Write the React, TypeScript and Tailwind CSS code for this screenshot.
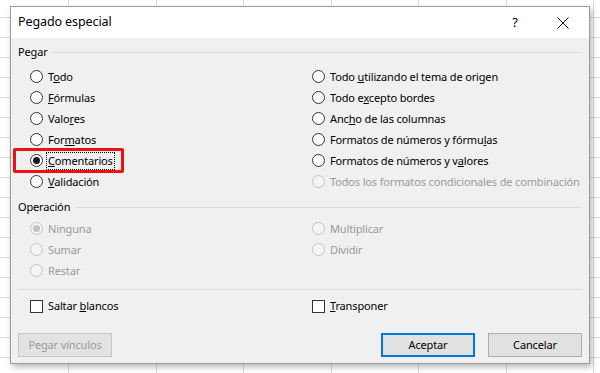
import type { ReactNode } from "react";

const font = { fontFamily: '"Noto Sans", "Open Sans", sans-serif' };

const colWidths = [69, 88, 87, 88, 87, 88, 87, 88];

function Hoja() {
  return (
    <div className="flex -mt-[2px]">
      {colWidths.map((w, i) => (
        <div key={i} className="shrink-0 flex flex-col" style={{ width: w }}>
          {Array.from({ length: 20 }).map((_, j) => (
            <div key={j} className="h-[20px] border-r border-b border-[#dadada]" />
          ))}
        </div>
      ))}
    </div>
  );
}

function Radio({
  label,
  checked = false,
  disabled = false,
  focus = false,
}: {
  label: ReactNode;
  checked?: boolean;
  disabled?: boolean;
  focus?: boolean;
}) {
  return (
    <div className="h-[21px] flex items-center gap-[5px]">
      <span
        className={`w-[13px] h-[13px] rounded-full border flex items-center justify-center shrink-0 ${
          disabled ? "border-[#c4c4c4] bg-[#f4f4f4]" : "border-[#333333] bg-white"
        }`}
      >
        {checked && (
          <span
            className={`w-[7px] h-[7px] rounded-full ${
              disabled ? "bg-[#c4c4c4]" : "bg-[#1a1a1a]"
            }`}
          />
        )}
      </span>
      <span
        className={`text-[11px] tracking-[-0.15px] leading-[14px] whitespace-nowrap ${
          disabled ? "text-[#9a9a9a]" : "text-black"
        } ${focus ? "outline outline-1 outline-dotted outline-black outline-offset-[1px]" : ""}`}
      >
        {label}
      </span>
    </div>
  );
}

function Grupo({ titulo }: { titulo: string }) {
  return (
    <div className="flex items-center gap-[5px] h-full">
      <span className="text-[11px] tracking-[-0.15px] text-black leading-[14px]">{titulo}</span>
      <div className="flex-1 h-px bg-[#dcdcdc]" />
    </div>
  );
}

function Boton({
  children,
  disabled = false,
  primary = false,
}: {
  children: ReactNode;
  disabled?: boolean;
  primary?: boolean;
}) {
  return (
    <button
      className={`w-[94px] h-[24px] text-[11px] tracking-[-0.15px] flex items-center justify-center border ${
        disabled
          ? "bg-[#e3e3e3] border-[#c6c6c6] text-[#9a9a9a]"
          : primary
          ? "bg-[#e1e1e1] border-[#0078d7] shadow-[inset_0_0_0_1px_#0078d7] text-black"
          : "bg-[#e1e1e1] border-[#adadad] text-black"
      }`}
    >
      {children}
    </button>
  );
}

export default function App() {
  return (
    <div className="w-[600px] h-[373px] relative overflow-hidden bg-white" style={font}>
      <Hoja />

      <div className="absolute left-[10px] top-[6px] w-[580px] h-[358px] border border-[#9c9c9c] bg-[#f0f0f0] shadow-[2px_3px_6px_rgba(0,0,0,0.28)] flex flex-col">
        <div className="h-[31px] bg-white flex items-center pl-[7px] shrink-0">
          <span className="text-[12.5px] tracking-[-0.1px] text-black">Pegado especial</span>
          <span className="ml-auto text-[13px] text-black w-[12px] text-center">?</span>
          <span className="ml-[36px] mr-[20px] w-[12px] h-[12px] flex items-center justify-center">
            <svg width="12" height="12" viewBox="0 0 12 12">
              <path d="M0.5 0.5 L11.5 11.5 M11.5 0.5 L0.5 11.5" stroke="#111" strokeWidth="1" />
            </svg>
          </span>
        </div>

        <div className="flex-1 flex flex-col pl-[7px] pr-[7px]">
          <div className="h-[28px]">
            <Grupo titulo="Pegar" />
          </div>

          <div className="flex pl-[12px]">
            <div className="w-[282px] shrink-0 flex flex-col">
              <Radio label={<>T<u>o</u>do</>} />
              <Radio label={<><u>F</u>órmulas</>} />
              <Radio label={<>Valo<u>r</u>es</>} />
              <Radio label={<>For<u>m</u>atos</>} />
              <Radio label={<><u>C</u>omentarios</>} checked focus />
              <Radio label={<><u>V</u>alidación</>} />
            </div>
            <div className="flex flex-col">
              <Radio label={<>Todo <u>u</u>tilizando el tema de origen</>} />
              <Radio label={<>Todo e<u>x</u>cepto bordes</>} />
              <Radio label={<>Anc<u>h</u>o de las columnas</>} />
              <Radio label={<>Formatos de números y fórmu<u>l</u>as</>} />
              <Radio label={<>Formatos de números y v<u>a</u>lores</>} />
              <Radio label="Todos los formatos condicionales de combinación" disabled />
            </div>
          </div>

          <div className="h-[26px] pt-[4px]">
            <Grupo titulo="Operación" />
          </div>

          <div className="flex pl-[12px]">
            <div className="w-[282px] shrink-0 flex flex-col">
              <Radio label="Ninguna" checked disabled />
              <Radio label="Sumar" disabled />
              <Radio label="Restar" disabled />
            </div>
            <div className="flex flex-col">
              <Radio label="Multiplicar" disabled />
              <Radio label="Dividir" disabled />
            </div>
          </div>

          <div className="mt-[8px] h-px bg-[#dcdcdc]" />

          <div className="h-[33px] flex items-center pl-[12px]">
            <div className="w-[282px] shrink-0 flex items-center gap-[5px]">
              <span className="w-[13px] h-[13px] border border-[#333333] bg-white" />
              <span className="text-[11px] tracking-[-0.15px] text-black">
                Saltar <u>b</u>lancos
              </span>
            </div>
            <div className="flex items-center gap-[5px]">
              <span className="w-[13px] h-[13px] border border-[#333333] bg-white" />
              <span className="text-[11px] tracking-[-0.15px] text-black">
                <u>T</u>ransponer
              </span>
            </div>
          </div>

          <div className="mt-[10px] flex items-center">
            <Boton disabled>Pegar vínculos</Boton>
            <div className="ml-auto flex gap-[13px]">
              <Boton primary>Aceptar</Boton>
              <Boton>Cancelar</Boton>
            </div>
          </div>
        </div>

        <div className="absolute left-[2px] top-[141px] w-[111px] h-[25px] border-[3px] border-[#ee1111] rounded-[2px]" />
      </div>
    </div>
  );
}
